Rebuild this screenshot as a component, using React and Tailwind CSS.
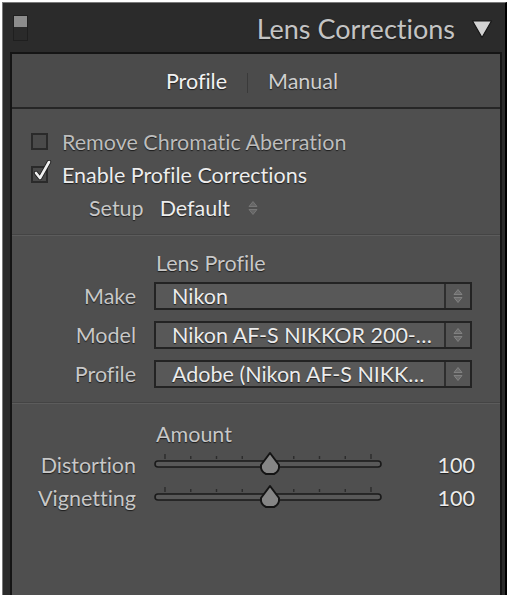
import React from "react";

const shadow = "[text-shadow:0_1px_1px_#1c1c1c]";
const txt = `text-[21.5px] leading-[26px] ${shadow}`;

const UpDown = ({ className = "" }) => (
  <svg width="10" height="16" viewBox="0 0 10 16" className={className}>
    <path d="M1 6.5 L5 1.5 L9 6.5 Z" fill="#6c6c6c" stroke="#8a8a8a" strokeWidth="0.8" />
    <path d="M1 9.5 L5 14.5 L9 9.5 Z" fill="#6c6c6c" stroke="#8a8a8a" strokeWidth="0.8" />
  </svg>
);

const Checkbox = ({ checked }) => (
  <div className="relative w-[17px] h-[17px] border-2 border-[#2a2a2a] bg-[#4a4a4a]">
    {checked && (
      <svg
        width="20"
        height="22"
        viewBox="0 0 20 22"
        className="absolute left-[0px] top-[-8px]"
      >
        <path
          d="M3 13 L7 18 L16 2"
          fill="none"
          stroke="#1e1e1e"
          strokeWidth="4.4"
          strokeLinecap="round"
          strokeLinejoin="round"
        />
        <path
          d="M3 13 L7 18 L16 2"
          fill="none"
          stroke="#f0f0f0"
          strokeWidth="2.6"
          strokeLinecap="round"
          strokeLinejoin="round"
        />
      </svg>
    )}
  </div>
);

const Select = ({ value }) => (
  <div className="flex w-[318px] h-[28px] border-2 border-[#232323] bg-[#585858]">
    <div
      className={`flex-1 flex items-center pl-[16px] ${txt} text-[#ececec] whitespace-nowrap border-r-2 border-[#2e2e2e]`}
    >
      {value}
    </div>
    <div className="w-[24px] flex items-center justify-center bg-[#555]">
      <UpDown />
    </div>
  </div>
);

const Slider = ({ pos = 0.5 }) => {
  const w = 228;
  const ticks = Array.from({ length: 9 }, (_, i) => 11 + (i * (w - 22)) / 8);
  const cx = 11 + pos * (w - 22) + 2;
  return (
    <svg width={w} height="30" viewBox={`0 0 ${w} 30`}>
      {ticks.map((x, i) => (
        <line
          key={i}
          x1={x}
          x2={x}
          y1={i === 0 || i === 8 ? 6 : 8}
          y2="11"
          stroke="#2c2c2c"
          strokeWidth="1.4"
        />
      ))}
      <rect x="1" y="13" width={w - 2} height="6" rx="3" fill="#595959" stroke="#1a1a1a" strokeWidth="1.6" />
      <path
        d={`M${cx} 5 L${cx + 9} 17 A 10 9 0 0 1 ${cx + 4} 26 L${cx - 4} 26 A 10 9 0 0 1 ${cx - 9} 17 Z`}
        fill="#858585"
        stroke="#141414"
        strokeWidth="2"
        strokeLinejoin="round"
      />
    </svg>
  );
};

export default function App() {
  return (
    <div
      className="w-[509px] h-[600px] bg-white pt-[2px] pl-[2px] [font-variant-ligatures:none]"
      style={{ fontFamily: "Lato, 'Open Sans', sans-serif" }}
    >
      <div className="w-[505px] h-[593px] bg-[#2b2b2b] border-l border-t border-[#7a7a7a] border-r-2 border-r-black flex flex-col">
        <div className="h-[49px] flex items-center justify-between pl-[10px] pr-[12px]">
          <div className="w-[15px] h-[26px] border border-[#1f1f1f] flex flex-col">
            <div className="h-[11px] bg-[#8c8c8c]" />
            <div className="flex-1 bg-[#2a2a2a]" />
          </div>
          <div className="flex items-center gap-[16px] pt-[3px]">
            <span className={`text-[27px] leading-[32px] text-[#c4c4c4] ${shadow}`}>Lens Corrections</span>
            <svg width="22" height="20" viewBox="0 0 22 20">
              <path d="M1.5 2 L20.5 2 L11 18.5 Z" fill="#d2d2d2" stroke="#151515" strokeWidth="1.2" strokeLinejoin="round" />
            </svg>
          </div>
        </div>

        <div className="flex-1 ml-[7px] mr-[3px] border-2 border-b-0 border-[#151515] bg-[#4f4f4f] flex flex-col">
          <div className="h-[55px] bg-[#4b4b4b] border-b-2 border-[#262626] flex items-center justify-center gap-[20px] pr-[8px]">
            <span className={`${txt} text-[#f2f2f2]`}>Profile</span>
            <span className="w-px h-[20px] bg-[#3a3a3a] mt-[4px]" />
            <span className={`${txt} text-[#cfcfcf]`}>Manual</span>
          </div>

          <div className="pt-[16px] pl-[19px] flex flex-col">
            <div className="h-[33px] flex items-center gap-[14px]">
              <Checkbox />
              <span className={`${txt} text-[#bdbdbd]`}>Remove Chromatic Aberration</span>
            </div>
            <div className="h-[33px] flex items-center gap-[14px]">
              <Checkbox checked />
              <span className={`${txt} text-[#ededed]`}>Enable Profile Corrections</span>
            </div>
            <div className="h-[34px] flex items-center pl-[58px] gap-[16px]">
              <span className={`${txt} text-[#c8c8c8]`}>Setup</span>
              <span className={`${txt} text-[#ededed]`}>Default</span>
              <UpDown className="ml-[2px] opacity-80" />
            </div>
          </div>

          <div className="mt-[10px] border-t border-[#5c5c5c] shadow-[0_-1px_0_#444]" />

          <div className="pt-[14px] pr-[27px] flex flex-col">
            <div className={`pl-[144px] h-[26px] flex items-center ${txt} text-[#c8c8c8]`}>
              Lens Profile
            </div>
            <div className="mt-[6px] flex flex-col gap-[11px]">
              {[
                ["Make", "Nikon"],
                ["Model", "Nikon AF-S NIKKOR 200-…"],
                ["Profile", "Adobe (Nikon AF-S NIKK…"],
              ].map(([l, v]) => (
                <div key={l} className="h-[28px] flex items-center">
                  <span className={`w-[124px] text-right ${txt} text-[#c8c8c8]`}>{l}</span>
                  <div className="ml-[18px]">
                    <Select value={v} />
                  </div>
                </div>
              ))}
            </div>
          </div>

          <div className="mt-[15px] border-t border-[#5c5c5c] shadow-[0_-1px_0_#444]" />

          <div className="pt-[17px] flex flex-col">
            <div className={`pl-[144px] h-[26px] flex items-center ${txt} text-[#c8c8c8]`}>
              Amount
            </div>
            <div className="mt-[3px] flex flex-col gap-[3px]">
              {["Distortion", "Vignetting"].map((l) => (
                <div key={l} className="h-[30px] flex items-center">
                  <span className={`w-[124px] text-right ${txt} text-[#c8c8c8]`}>{l}</span>
                  <div className="ml-[18px] mt-[-4px]">
                    <Slider />
                  </div>
                  <span className={`w-[93px] text-right ${txt} text-[#ececec]`}>100</span>
                </div>
              ))}
            </div>
          </div>
        </div>
      </div>
    </div>
  );
}
